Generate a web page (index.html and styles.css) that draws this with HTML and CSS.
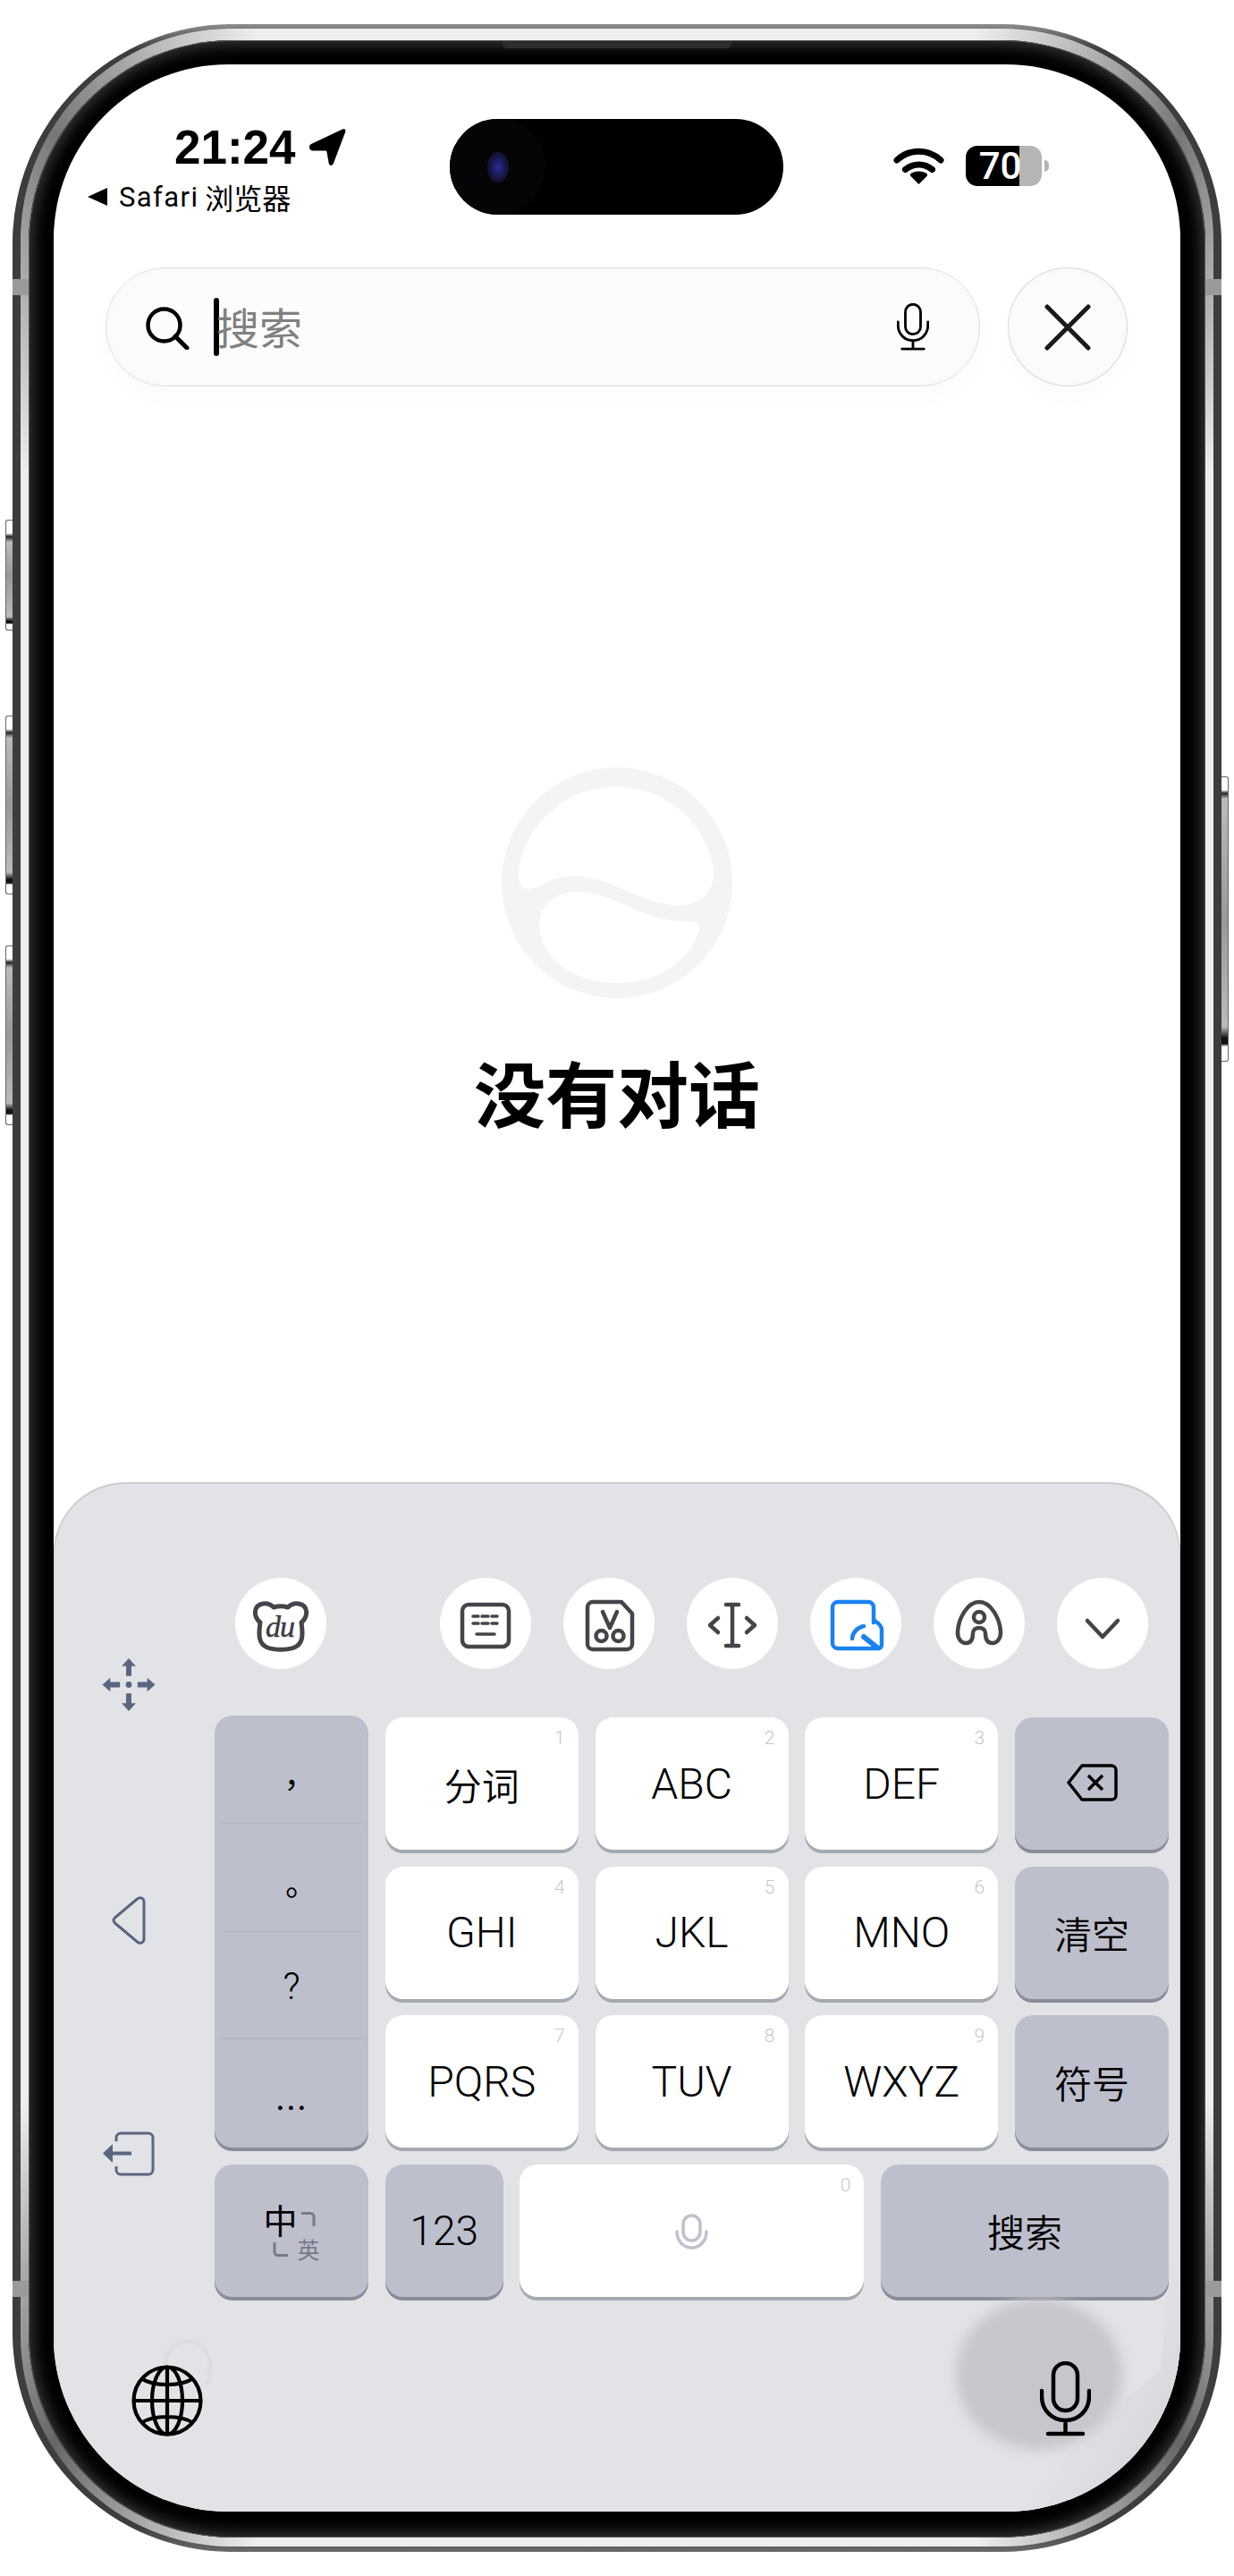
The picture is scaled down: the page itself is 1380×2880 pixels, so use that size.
FILE: index.html
```html
<!DOCTYPE html>
<html lang="zh-CN">
<head>
    <meta charset="UTF-8">
    <meta name="viewport" content="width=device-width, initial-scale=1.0">
    <title>搜索</title>
    <link rel="stylesheet" href="styles.css">
</head>
<body>
    <svg class="defs" width="0" height="0">
        <symbol id="mic" viewBox="0 0 57 84">
            <rect x="15" y="2" width="27" height="53" rx="13.5" fill="none" stroke="currentColor" stroke-width="4.500"/>
            <path d="M2 33v6c0 15 11 27 26.500 27S55 54 55 39v-6M28.500 66v15M9 81h39" fill="none" stroke="currentColor" stroke-width="4.500" stroke-linecap="round"/>
        </symbol>
    </svg>

    <div class="phone">
        <span class="btn btn-action"></span>
        <span class="btn btn-up"></span>
        <span class="btn btn-down"></span>
        <span class="btn btn-power"></span>
        <span class="band band-lt"></span>
        <span class="band band-rt"></span>
        <span class="band band-lb"></span>
        <span class="band band-rb"></span>
        <span class="speaker"></span>

        <div class="metal">
            <div class="bezel">
                <div class="screen">
                    <div class="status">
                        <div class="status-left">
                            <div class="time-row">
                                <span class="time">21:24</span>
                                <svg class="loc" viewBox="0 0 41 41"><path d="M2 17 37 .6c2.500-1.100 4 .4 3.300 2.700L27 38.500c-1.300 3.300-4.700 3.300-5.300 0L19.500 26c-.2-1-.8-1.500-1.800-1.500H4c-4.500 0-5.500-5.300-2-7.500z"/></svg>
                            </div>
                            <div class="back-row">
                                <span class="back-tri"></span>
                                <span class="back-text">Safari</span>
                                <span class="back-cn">浏览器</span>
                            </div>
                        </div>
                        <div class="island">
                            <span class="cam"><span class="lens"></span></span>
                            <span class="sensor"></span>
                        </div>
                        <div class="status-right">
                            <svg class="wifi" viewBox="0 0 57 41">
                                <path d="M4 14C18 1 39 1 53 14M13.500 24.500c9-7.500 21-7.500 30 0" fill="none" stroke="#000" stroke-width="7" stroke-linecap="round"/>
                                <path d="M28.500 41 20 32.500c-1.500-1.500-1.300-3 .3-4 5-2.700 11.400-2.700 16.400 0 1.600 1 1.800 2.500.3 4z"/>
                            </svg>
                            <div class="battery">70</div>
                        </div>
                    </div>

                    <div class="search-row">
                        <div class="search-bar">
                            <svg class="search-icon" viewBox="0 0 49 48"><circle cx="20.500" cy="20.500" r="18" fill="none" stroke="#000" stroke-width="4.500"/><path d="m33 33 13 13" stroke="#000" stroke-width="5" stroke-linecap="round"/></svg>
                            <span class="caret"></span>
                            <span class="placeholder">搜索</span>
                            <svg class="search-mic"><use href="#mic"/></svg>
                        </div>
                        <div class="close-btn">
                            <svg class="close-x" viewBox="0 0 52 52"><path d="M3 3l46 46M49 3 3 49" stroke="#1a1a1a" stroke-width="5" stroke-linecap="round"/></svg>
                        </div>
                    </div>

                    <div class="empty">
                        <svg class="empty-logo" viewBox="243 113 775 775">
                            <path fill-rule="evenodd" d="M630.500 113a387.500 387.500 0 1 0 .01 0zM298 470A332 332 0 0 1 956 460C960 530 905 577 840 577C720 577 610 478 490 478C430 478 390 500 360 515C330 530 298 520 298 470zM370 640C370 570 430 530 500 530C610 530 720 630 860 630H885C905 630 910 645 905 665C870 770 760 837 630 837C480 837 370 750 370 640z"/>
                        </svg>
                        <h1 class="empty-title">没有对话</h1>
                    </div>

                    <div class="keyboard">
                        <span class="sheen"></span>
                        <div class="kb-main">
                            <div class="kb-side">
                                <svg class="side-move" viewBox="0 0 60 60">
                                    <path d="M30 0l8 9h-5v11h-6V9h-5zM30 60l-8-9h5V40h6v11h5zM0 30l9-8v5h11v6H9v5zM60 30l-9 8v-5H40v-6h11v-5z"/>
                                    <circle cx="30" cy="30" r="3.500"/>
                                </svg>
                                <svg class="side-back" viewBox="0 0 38 54"><path d="M3.500 24 28.500 3C32 .5 36 2 36 6.500v41c0 4.500-4 6-7.500 3.500L3.500 30c-2-2-2-4 0-6z" fill="none" stroke-width="3" stroke-linejoin="round"/></svg>
                                <svg class="side-exit" viewBox="0 0 58 50"><path d="M15 11V7a5 5 0 0 1 5-5h31a5 5 0 0 1 5 5v36a5 5 0 0 1-5 5H20a5 5 0 0 1-5-5v-4" fill="none" stroke-width="3"/><path d="M0 24.500 11 14v8.500h21v4H11V35z" stroke="none"/></svg>
                            </div>

                            <div class="kb-right">
                                <div class="toolbar">
                                    <div class="tool tool-first">
                                        <svg viewBox="0 0 102 102">
                                            <path d="M28 50C20 43 20 31 31 29C36 28 40 30 43 33C48 31.500 54 31.500 59 33C62 30 66 28 71 29C82 31 82 43 74 50C76 64 76 74 66 78C58 81 44 81 36 78C26 74 26 64 28 50z" class="ico ico-bear"/>
                                            <text x="50" y="66" class="du">du</text>
                                        </svg>
                                    </div>
                                    <div class="tool">
                                        <svg viewBox="0 0 102 102">
                                            <rect x="25" y="30" width="52" height="47" rx="7" class="ico"/>
                                            <path d="M37 43h6M47 43h7M58 43h6M37 51h6M47 51h7M58 51h6M41 63h20" class="ico ico-thin"/>
                                        </svg>
                                    </div>
                                    <div class="tool">
                                        <svg viewBox="0 0 102 102">
                                            <path d="M33 27h32l12 13v34a6 6 0 0 1-6 6H33a6 6 0 0 1-6-6V33a6 6 0 0 1 6-6z" class="ico"/>
                                            <path d="m44 38 8 18 8-18" class="ico"/>
                                            <circle cx="42.500" cy="65" r="6" class="ico"/>
                                            <circle cx="61.500" cy="65" r="6" class="ico"/>
                                        </svg>
                                    </div>
                                    <div class="tool">
                                        <svg viewBox="0 0 102 102">
                                            <path d="M44 30h14M51 30v46M44 76h14" class="ico"/>
                                            <path d="m35 45-9 8 9 8M67 45l9 8-9 8" class="ico"/>
                                        </svg>
                                    </div>
                                    <div class="tool">
                                        <svg viewBox="0 0 102 102">
                                            <path d="M71 50V33a6 6 0 0 0-6-6H31a6 6 0 0 0-6 6v40a6 6 0 0 0 6 6h45a4 4 0 0 0 4-4V58c0-4-3-7-9-11" class="ico ico-blue"/>
                                            <path d="M47 68c0-6 6-13 13-14" class="ico ico-blue"/>
                                            <path d="M60 66l15 12" class="ico ico-blue ico-slash"/>
                                        </svg>
                                    </div>
                                    <div class="tool">
                                        <svg viewBox="0 0 102 102">
                                            <path d="M51 27c-13 0-23 18-24 33-.5 8 4 13 9 13 7 0 8-7 8-11 0-4 3-6 7-6s7 2 7 6c0 4 1 11 8 11 5 0 9.500-5 9-13-1-15-11-33-24-33z" class="ico"/>
                                            <circle cx="51" cy="44" r="6" class="ico"/>
                                        </svg>
                                    </div>
                                    <div class="tool">
                                        <svg viewBox="0 0 102 102"><path d="m34 48 17 18 17-18" class="ico"/></svg>
                                    </div>
                                </div>

                                <div class="keys">
                                    <div class="key-gray punct">
                                        <div class="punct-cell punct-cjk">，</div>
                                        <div class="punct-cell punct-cjk">。</div>
                                        <div class="punct-cell punct-q">?</div>
                                        <div class="punct-cell punct-dots">...</div>
                                    </div>
                                    <div class="key key-white key-cn">分词<span class="num">1</span></div>
                                    <div class="key key-white">ABC<span class="num">2</span></div>
                                    <div class="key key-white">DEF<span class="num">3</span></div>
                                    <div class="key key-gray">
                                        <svg class="backspace" viewBox="0 0 57 42"><path d="M17 2h33a5 5 0 0 1 5 5v28a5 5 0 0 1-5 5H17L2 21z" fill="none" stroke="#000" stroke-width="3.500" stroke-linejoin="round"/><path d="m24 13 16 16M40 13 24 29" stroke="#000" stroke-width="3.500"/></svg>
                                    </div>
                                    <div class="key key-white">GHI<span class="num">4</span></div>
                                    <div class="key key-white">JKL<span class="num">5</span></div>
                                    <div class="key key-white">MNO<span class="num">6</span></div>
                                    <div class="key key-gray key-cn">清空</div>
                                    <div class="key key-white">PQRS<span class="num">7</span></div>
                                    <div class="key key-white">TUV<span class="num">8</span></div>
                                    <div class="key key-white">WXYZ<span class="num">9</span></div>
                                    <div class="key key-gray key-cn">符号</div>
                                    <div class="bottom-keys">
                                        <div class="key key-gray k-lang">
                                            <div class="lang">
                                                <span class="lang-zh">中</span>
                                                <svg class="lang-corner" viewBox="0 0 17 16"><path d="M1 1.500h10a4 4 0 0 1 4 4V16" /></svg>
                                                <svg class="lang-corner" viewBox="0 0 17 16"><path d="M2 0v10.500a4 4 0 0 0 4 4h11" /></svg>
                                                <span class="lang-en">英</span>
                                            </div>
                                        </div>
                                        <div class="key key-gray k-123">123</div>
                                        <div class="key key-white k-space">
                                            <svg class="space-mic" viewBox="0 0 37 40"><rect x="9" y="2" width="19" height="28" rx="9.500" fill="none" stroke="#bfc2cc" stroke-width="3.500"/><path d="M2 20c0 10 7 18 16.500 18S35 30 35 20" fill="none" stroke="#bfc2cc" stroke-width="3.500" stroke-linecap="round"/></svg>
                                            <span class="num">0</span>
                                        </div>
                                        <div class="key key-gray k-search key-cn">搜索</div>
                                    </div>
                                </div>
                            </div>
                        </div>

                        <div class="kb-bottom">
                            <div class="globe-wrap">
                                <span class="ghost"></span>
                                <svg class="globe" viewBox="0 0 80 80">
                                    <g fill="none" stroke="#000" stroke-width="4.200">
                                        <circle cx="40" cy="40" r="37.500"/>
                                        <ellipse cx="40" cy="40" rx="17" ry="37.500"/>
                                        <path d="M40 2v76M2 40h76M11 15c7 5 17 7 29 7s22-2 29-7M11 65c7-5 17-7 29-7s22 2 29 7"/>
                                    </g>
                                </svg>
                            </div>
                            <div class="mic-wrap">
                                <span class="blob"></span>
                                <svg class="bottom-mic"><use href="#mic"/></svg>
                            </div>
                        </div>
                    </div>
                </div>
            </div>
        </div>
    </div>
</body>
</html>
```
FILE: styles.css
```css
body {
    margin: 0;
    background: #fff;
    font-family: Roboto, "Liberation Sans", "Noto Sans CJK SC", sans-serif;
    color: #000;
}
h1 {
    margin: 0;
}
.defs {
    position: absolute;
}

/* phone frame */
.phone {
    position: relative;
    box-sizing: border-box;
    width: 1352px;
    height: 2826px;
    margin: 27px 0 0 14px;
    padding: 5px 9px 6px;
    border-radius: 245px;
    background: linear-gradient(#8d8d8d, #3d3d3d 1%, #3d3d3d 99%, #6a6a6a);
}
.metal {
    box-sizing: border-box;
    height: 100%;
    padding: 13px 9px 10px;
    border-radius: 236px;
    background: conic-gradient(#eee 0deg, #eee 16deg, #777 26deg, #eee 36deg, #eee 144deg, #666 154deg, #eee 164deg, #eee 196deg, #666 206deg, #eee 216deg, #eee 324deg, #777 334deg, #eee 344deg, #eee 360deg);
}
.bezel {
    box-sizing: border-box;
    height: 100%;
    padding: 27px 28px 29px;
    border-radius: 228px;
    background: #000;
    box-shadow: inset 0 0 0 1px #555, inset 0 0 16px 6px #333;
}
.screen {
    position: relative;
    display: flex;
    flex-direction: column;
    height: 100%;
    overflow: hidden;
    border-radius: 195px;
    background: #fff;
}

/* hardware bits */
.btn {
    position: absolute;
    left: -8px;
    box-sizing: border-box;
    width: 8px;
    border: 1px solid #666;
    border-right: 0;
    border-radius: 3px 0 0 3px;
    background: linear-gradient(#fff 0, #fff 14px, #222 18px, #bbb 24px, #999 50%, #bbb 88%, #111 92%, #111 94%, #fff 95%);
}
.btn-action {
    top: 554px;
    height: 124px;
}
.btn-up {
    top: 773px;
    height: 200px;
}
.btn-down {
    top: 1030px;
    height: 201px;
}
.btn-power {
    left: auto;
    right: -8px;
    top: 841px;
    height: 319px;
    border: 1px solid #666;
    border-left: 0;
    border-radius: 0 3px 3px 0;
}
.band {
    position: absolute;
    width: 18px;
    height: 18px;
    background: #9a9a9a;
}
.band-lt,
.band-lb {
    left: 0;
}
.band-rt,
.band-rb {
    right: 0;
}
.band-lt,
.band-rt {
    top: 285px;
}
.band-lb,
.band-rb {
    top: 2523px;
}
.speaker {
    position: absolute;
    z-index: 1;
    left: 548px;
    top: 19px;
    width: 256px;
    height: 8px;
    border-radius: 0 0 5px 5px;
    background: #2c2c2c;
}

/* status bar */
.status {
    display: flex;
    height: 107px;
    margin-top: 61px;
    padding-left: 38px;
}
.status-left {
    width: 405px;
    padding-top: 9px;
}
.time-row {
    display: flex;
    align-items: center;
    gap: 15px;
    height: 45px;
    padding-left: 97px;
}
.time {
    font-family: "Liberation Sans", sans-serif;
    font-size: 53px;
    font-weight: 700;
}
.loc {
    width: 41px;
    height: 41px;
}
.back-row {
    display: flex;
    align-items: center;
    height: 30px;
    margin-top: 18px;
}
.back-tri {
    width: 0;
    height: 0;
    margin-right: 13px;
    border-top: 10px solid transparent;
    border-bottom: 10px solid transparent;
    border-right: 22px solid #000;
}
.back-text {
    font-size: 31px;
    letter-spacing: 1.400px;
}
.back-cn {
    margin-left: 7px;
    font-family: "Noto Sans CJK SC", sans-serif;
    font-size: 32px;
    line-height: 30px;
}
.island {
    display: flex;
    align-items: center;
    box-sizing: border-box;
    width: 373px;
    border-radius: 54px;
    background: #000;
}
.cam {
    display: flex;
    align-items: center;
    justify-content: center;
    width: 107px;
    height: 107px;
    border-radius: 50%;
    background: #050507;
}
.lens {
    width: 24px;
    height: 34px;
    border-radius: 50%;
    background: radial-gradient(#2a2a9a, #141438 60%, #0b1622);
}
.sensor {
    width: 240px;
    height: 70px;
    margin-left: 18px;
    border-radius: 30px;
    background: #000;
}
.status-right {
    display: flex;
    align-items: center;
    gap: 24px;
    padding-left: 123px;
    margin-top: -2px;
}
.wifi {
    width: 57px;
    height: 41px;
}
.battery {
    position: relative;
    display: flex;
    align-items: center;
    justify-content: center;
    box-sizing: border-box;
    width: 85px;
    height: 45px;
    padding-right: 8px;
    border-radius: 13px;
    background: linear-gradient(90deg, #000 70.500%, #b5b5b5 70.500%);
    color: #fff;
    font-size: 42px;
    font-weight: 500;
}
.battery::after {
    content: "";
    position: absolute;
    right: -8px;
    top: 16px;
    width: 5px;
    height: 13px;
    border-radius: 0 5px 5px 0;
    background: #b5b5b5;
}

/* search */
.search-row {
    display: flex;
    gap: 31px;
    height: 133px;
    margin-top: 59px;
    padding-left: 58px;
}
.search-bar {
    display: flex;
    align-items: center;
    box-sizing: border-box;
    width: 978px;
    padding: 0 56px 0 44px;
    border: 1px solid #dedede;
    border-radius: 67px;
    background: #fcfcfd;
    box-shadow: inset 0 0 24px rgba(0, 0, 0, 0.018), 0 12px 26px rgba(0, 0, 0, 0.02);
}
.search-icon {
    width: 49px;
    height: 48px;
    margin-top: 2px;
}
.caret {
    width: 6px;
    height: 65px;
    margin-left: 27px;
    border-radius: 3px;
    background: #000;
}
.placeholder {
    flex: 1;
    margin-top: -3px;
    margin-left: -3px;
    font-family: "Noto Sans CJK SC", sans-serif;
    font-size: 48px;
    color: #808080;
}
.search-mic {
    width: 36px;
    height: 53px;
}
.close-btn {
    display: flex;
    align-items: center;
    justify-content: center;
    box-sizing: border-box;
    width: 134px;
    height: 133px;
    border: 1px solid #d9d9d9;
    border-radius: 50%;
    background: #fcfcfd;
    box-shadow: inset 0 0 20px rgba(0, 0, 0, 0.02), 0 12px 26px rgba(0, 0, 0, 0.02);
}
.close-x {
    width: 52px;
    height: 52px;
}

/* empty state */
.empty {
    display: flex;
    flex-direction: column;
    align-items: center;
    flex: 1;
    padding-top: 426px;
}
.empty-logo {
    width: 258px;
    height: 258px;
    fill: #f4f4f4;
}
.empty-title {
    margin-top: 45px;
    font-family: "Noto Sans CJK SC", sans-serif;
    font-size: 80px;
    font-weight: 700;
    line-height: 116px;
}

/* keyboard */
.keyboard {
    position: relative;
    box-sizing: border-box;
    height: 1151px;
    padding: 106px 13px 0 0;
    border-top: 1px solid #cfd0d4;
    border-radius: 80px 80px 0 0;
    background: #e1e3e7;
    box-shadow: inset 1px 1px 0 #c9cacf, inset -1px 1px 0 #c9cacf;
}
.sheen {
    position: absolute;
    right: 0;
    bottom: 0;
    width: 220px;
    height: 400px;
    background: linear-gradient(300deg, #cfd1d9, #e1e3e7 40%);
    clip-path: polygon(100% 0, 100% 100%, 0 100%, 40% 85%, 90% 60%);
}
.kb-main {
    display: grid;
    grid-template-columns: 168px 1fr;
    column-gap: 12px;
}
.kb-side {
    display: flex;
    flex-direction: column;
    align-items: center;
    padding-top: 90px;
    fill: #5a6580;
    stroke: #5a6580;
}
.side-move {
    width: 60px;
    height: 59px;
    stroke: none;
}
.side-back {
    width: 38px;
    height: 54px;
    margin-top: 207px;
}
.side-exit {
    width: 58px;
    height: 50px;
    margin-top: 209px;
}
.toolbar {
    display: flex;
    gap: 36px;
    height: 102px;
    margin-bottom: 54px;
    padding-left: 23px;
}
.tool {
    width: 102px;
    height: 102px;
    border-radius: 50%;
    background: #fff;
}
.tool-first {
    margin-right: 91px;
}
.tool svg {
    display: block;
    width: 102px;
    height: 102px;
}
.ico {
    fill: none;
    stroke: #44444a;
    stroke-width: 4.500;
    stroke-linecap: round;
    stroke-linejoin: round;
}
.ico-thin {
    stroke-width: 3.500;
}
.ico-bear {
    stroke-width: 5;
}
.ico-blue {
    stroke: #1a82f0;
}
.ico-slash {
    stroke-width: 6;
}
.du {
    font-family: "Liberation Serif", serif;
    font-size: 34px;
    font-style: italic;
    text-anchor: middle;
    letter-spacing: -1px;
    fill: #3c3c44;
    stroke: #3c3c44;
    stroke-width: 0.500;
}
.keys {
    display: grid;
    grid-template-columns: 172px 216px 216px 216px 172px;
    grid-auto-rows: 148px;
    column-gap: 18.750px;
    row-gap: 18.500px;
}
.key {
    position: relative;
    display: flex;
    align-items: center;
    justify-content: center;
    border-radius: 20px;
    font-size: 48px;
    font-weight: 350;
}
.key-white {
    background: #fff;
    box-shadow: 0 4px 0 #a5a9b2;
}
.key-gray {
    background: #bdbfcc;
    box-shadow: 0 4px 0 #8a8d99;
}
.key-cn {
    font-family: "Noto Sans CJK SC", sans-serif;
    font-size: 42px;
    font-weight: 350;
}
.num {
    position: absolute;
    top: 11px;
    right: 15px;
    font-family: Roboto, sans-serif;
    font-size: 21px;
    font-weight: 300;
    color: #c6c7cb;
}
.punct {
    display: grid;
    grid-row: span 3;
    grid-template-rows: repeat(4, 1fr);
    margin-top: -2px;
    border-radius: 20px;
}
.punct-cell {
    display: flex;
    align-items: center;
    justify-content: center;
    box-sizing: border-box;
    min-height: 0;
    margin: 0 7px;
    border-bottom: 1px solid #adb0bd;
    font-size: 42px;
    font-weight: 300;
    line-height: 1;
}
.punct-cell:last-child {
    border-bottom: 0;
}
.punct-cjk {
    padding-top: 30px;
    font-family: "Noto Sans CJK TC", sans-serif;
    font-size: 36px;
    font-weight: 400;
}
.punct-q {
    padding-top: 4px;
}
.punct-dots {
    padding-top: 8px;
    font-size: 42px;
    font-weight: 400;
    letter-spacing: 1px;
}
.backspace {
    width: 57px;
    height: 42px;
    margin-top: -2px;
}
.bottom-keys {
    display: flex;
    gap: 18.750px;
    grid-column: 1 / -1;
}
.k-lang {
    width: 172px;
}
.k-123 {
    width: 132px;
    font-size: 46px;
}
.k-space {
    width: 385px;
}
.k-search {
    width: 322px;
}
.space-mic {
    width: 37px;
    height: 40px;
    margin-top: 2px;
}
.lang {
    display: grid;
    grid-template-columns: 38px 25px;
    grid-template-rows: 42px 25px;
    align-items: center;
    justify-items: center;
}
.lang-zh {
    font-family: "Noto Sans CJK SC", sans-serif;
    font-size: 38px;
    font-weight: 400;
    line-height: 42px;
}
.lang-en {
    font-family: "Noto Sans CJK SC", sans-serif;
    font-size: 25px;
    font-weight: 400;
    line-height: 25px;
    color: #777a88;
}
.lang-corner {
    width: 17px;
    height: 16px;
    fill: none;
    stroke: #777a88;
    stroke-width: 3;
}
.kb-bottom {
    display: flex;
    justify-content: space-between;
    align-items: flex-end;
    height: 156px;
    padding: 0 87px;
}
.globe-wrap,
.mic-wrap {
    position: relative;
    display: flex;
}
.ghost {
    position: absolute;
    left: 36px;
    top: -28px;
    width: 50px;
    height: 60px;
    border: 2px solid rgba(0, 0, 0, 0.07);
    border-radius: 50%;
    filter: blur(2px);
    clip-path: inset(0 0 20% 0);
}
.globe {
    position: relative;
    width: 80px;
    height: 80px;
}
.blob {
    position: absolute;
    left: -94px;
    top: -70px;
    width: 186px;
    height: 169px;
    border-radius: 50%;
    background: #c6c7cc;
    filter: blur(7px);
}
.bottom-mic {
    position: relative;
    width: 57px;
    height: 84px;
}
```
